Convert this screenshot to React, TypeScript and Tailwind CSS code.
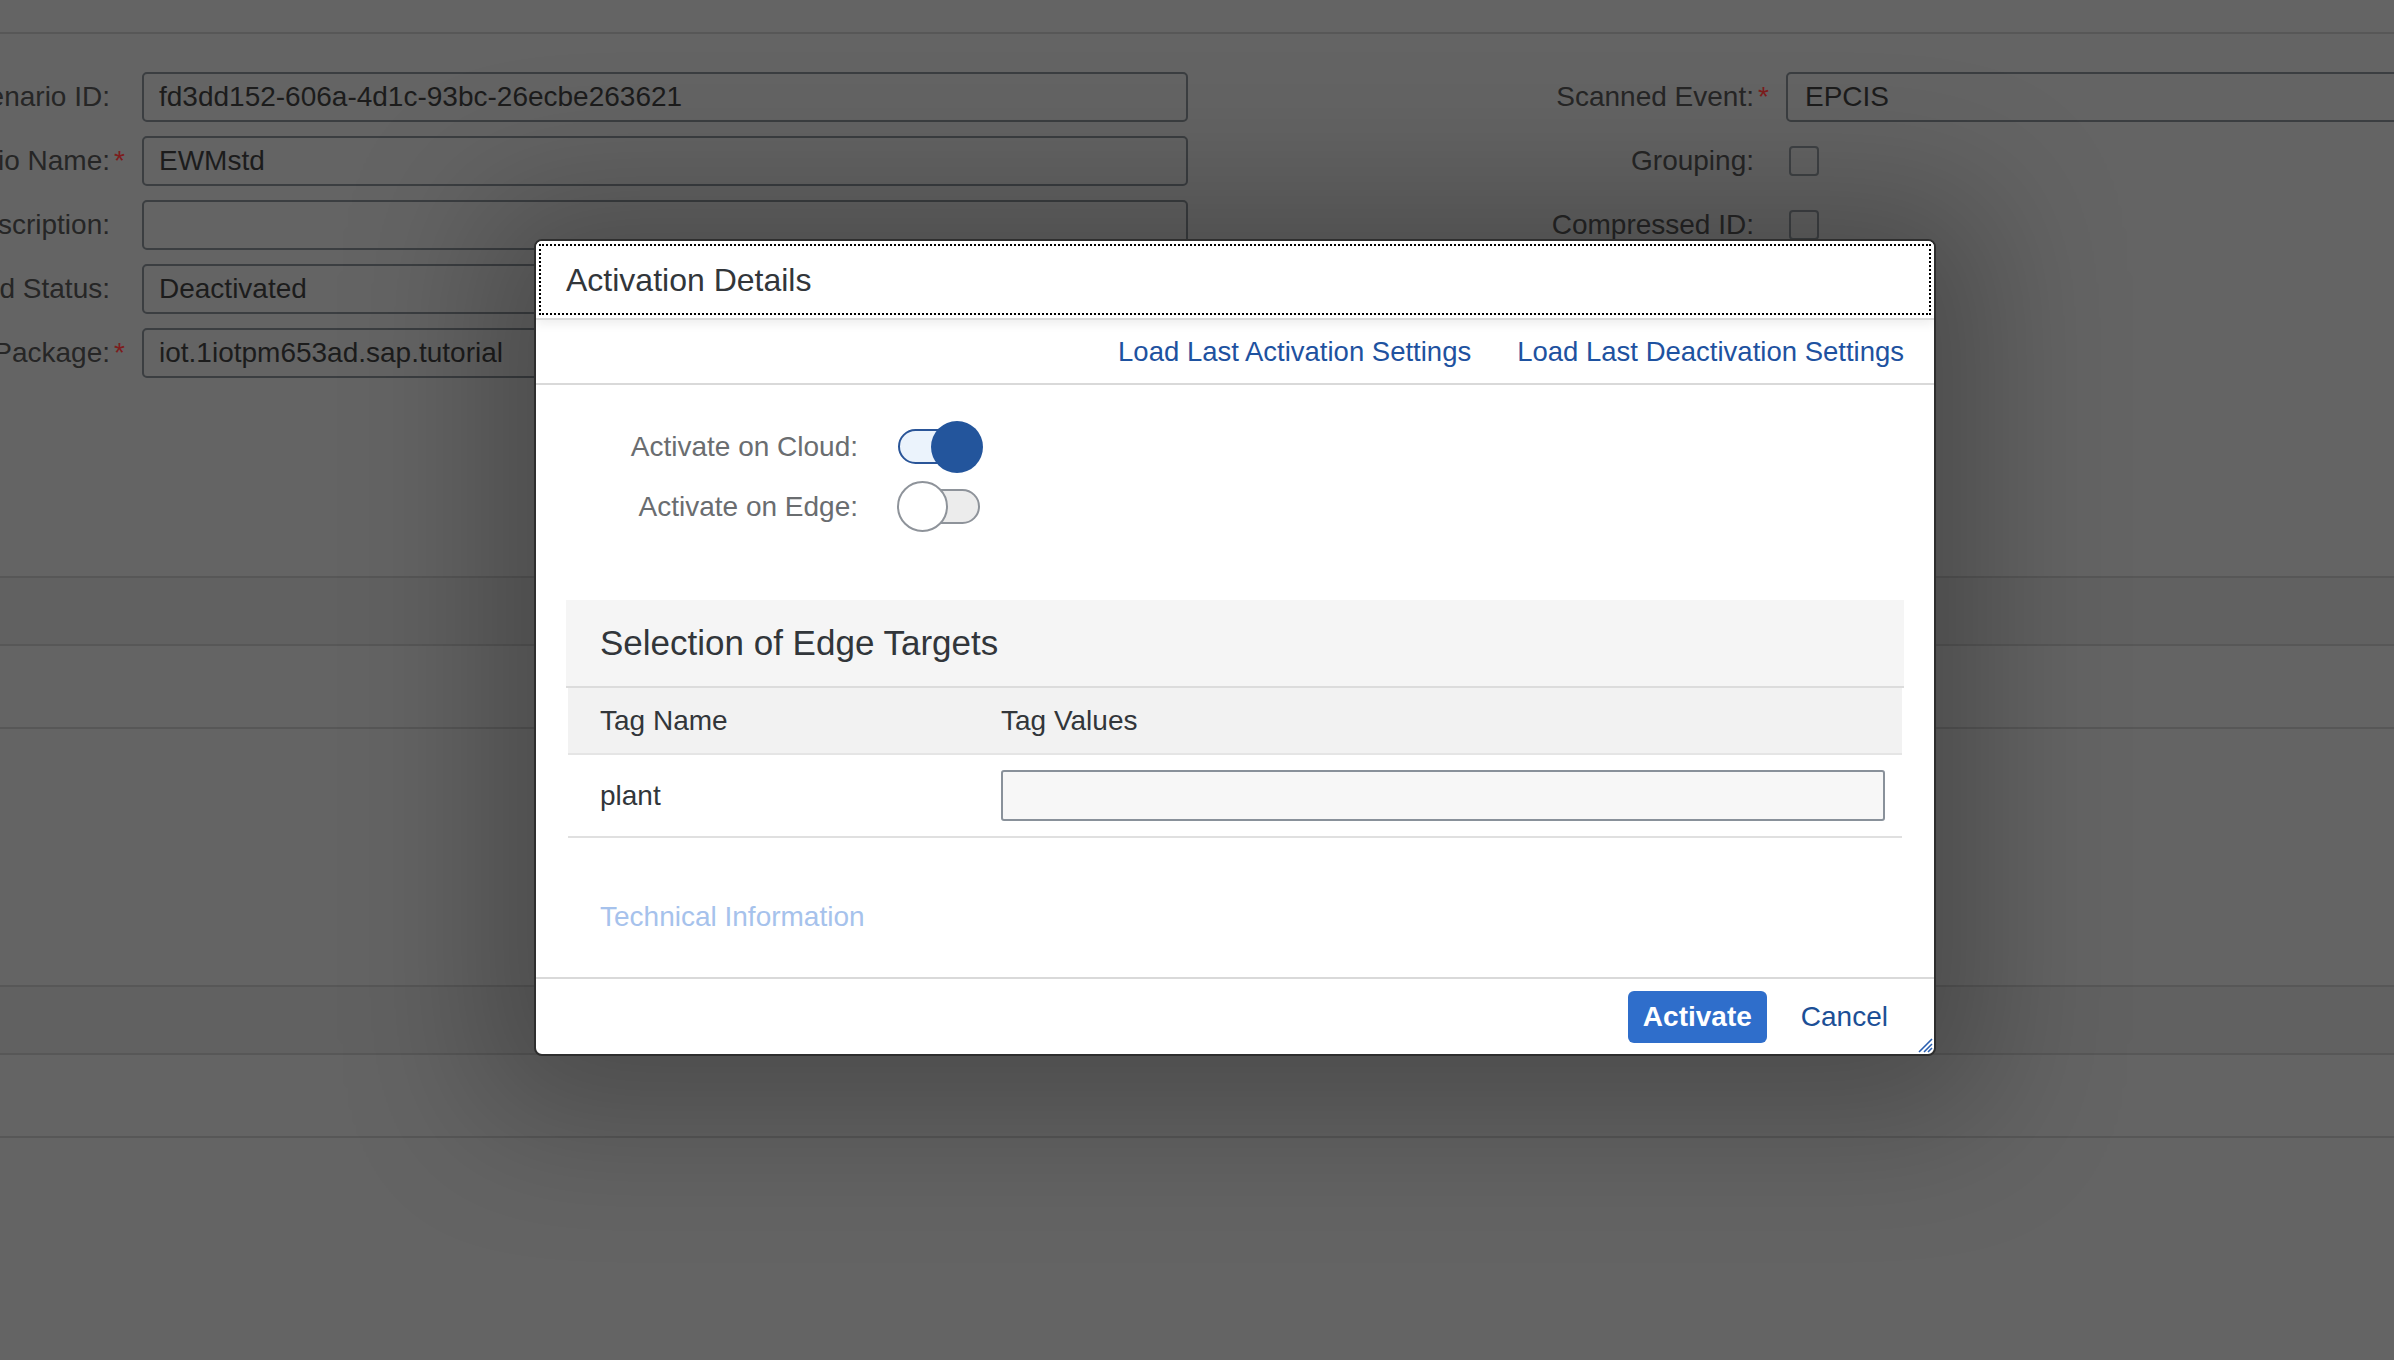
import React from "react";

type Field = { label: string; req?: boolean; value: string };

const leftFields: Field[] = [
  { label: "Scenario ID:", value: "fd3dd152-606a-4d1c-93bc-26ecbe263621" },
  { label: "Scenario Name:", req: true, value: "EWMstd" },
  { label: "Description:", value: "" },
  { label: "Deployed Status:", value: "Deactivated" },
  { label: "Package:", req: true, value: "iot.1iotpm653ad.sap.tutorial" },
];

function Switch({ on }: { on: boolean }) {
  if (on) {
    return (
      <div className="relative h-[52px] w-[86px]">
        <div className="absolute left-[1px] top-[8px] h-[35px] w-[70px] rounded-full border-2 border-[#2a5598] bg-[#ebf3fc]" />
        <div className="absolute right-0 top-0 h-[52px] w-[52px] rounded-full bg-[#23559c]" />
      </div>
    );
  }
  return (
    <div className="relative h-[52px] w-[86px]">
      <div className="absolute left-[20px] right-[3px] top-[8px] h-[35px] rounded-full border-2 border-[#8e939a] bg-[#ececec]" />
      <div className="absolute left-0 top-0 h-[51px] w-[51px] rounded-full border-2 border-[#8e939a] bg-white" />
    </div>
  );
}

function BgRow({ field, right }: { field: Field; right?: React.ReactNode }) {
  return (
    <div className="flex h-[50px] items-center">
      <div className="flex w-[110px] shrink-0 justify-end overflow-hidden whitespace-nowrap text-[#262626]">
        {field.label}
      </div>
      <span className="w-[32px] shrink-0 pl-[4px] text-[#7d1c1c]">{field.req ? "*" : ""}</span>
      <div className="flex h-[50px] w-[1046px] shrink-0 items-center rounded-[5px] border-2 border-[#3b3e41] px-[15px] text-[#1c1c1c]">
        {field.value}
      </div>
      {right}
    </div>
  );
}

function RightItem({ label, req, children }: { label: string; req?: boolean; children: React.ReactNode }) {
  return (
    <div className="ml-[112px] flex shrink-0 items-center">
      <div className="w-[454px] shrink-0 text-right whitespace-nowrap text-[#262626]">{label}</div>
      <span className="w-[32px] shrink-0 pl-[4px] text-[#7d1c1c]">{req ? "*" : ""}</span>
      {children}
    </div>
  );
}

const Checkbox = () => (
  <div className="ml-[3px] h-[30px] w-[30px] shrink-0 rounded-[4px] border-2 border-[#3f4245]" />
);

export default function App() {
  return (
    <div className="relative h-[1360px] w-[2394px] overflow-hidden bg-[#646464] font-['Liberation_Sans',Arial,sans-serif] text-[28px] leading-[40px]">
      {/* page behind the dialog */}
      <div className="h-[34px] border-b-2 border-[#575757]" />
      <div className="flex flex-col gap-[14px] pt-[38px]">
        <BgRow
          field={leftFields[0]}
          right={
            <RightItem label="Scanned Event:" req>
              <div className="flex h-[50px] w-[700px] shrink-0 items-center rounded-[5px] border-2 border-[#3b3e41] px-[17px] text-[#1c1c1c]">
                EPCIS
              </div>
            </RightItem>
          }
        />
        <BgRow
          field={leftFields[1]}
          right={
            <RightItem label="Grouping:">
              <Checkbox />
            </RightItem>
          }
        />
        <BgRow
          field={leftFields[2]}
          right={
            <RightItem label="Compressed ID:">
              <Checkbox />
            </RightItem>
          }
        />
        <BgRow field={leftFields[3]} />
        <BgRow field={leftFields[4]} />
      </div>
      <div className="mt-[198px]">
        <div className="h-[68px] border-t-2 border-[#575757] bg-[#616161]" />
        <div className="h-[83px] border-t-2 border-[#575757]" />
        <div className="h-[258px] border-t-2 border-[#575757]" />
        <div className="h-[68px] border-t-2 border-[#575757] bg-[#616161]" />
        <div className="h-[83px] border-t-2 border-[#575757]" />
        <div className="border-t-2 border-[#575757]" />
      </div>

      {/* dialog */}
      <div className="absolute left-[534px] top-[239px] flex h-[817px] w-[1402px] flex-col overflow-hidden rounded-[8px] border-2 border-[#2e2e2e] bg-white shadow-[0_10px_140px_50px_rgba(0,0,0,0.25)]">
        <div className="relative z-10 h-[79px] shrink-0 border-b-2 border-[#d9d9d9] bg-white p-[3px] shadow-[0_4px_10px_rgba(0,0,0,0.07)]">
          <div className="flex h-full items-center border-2 border-dotted border-black pl-[25px] text-[32px] text-[#32363a]">
            Activation Details
          </div>
        </div>
        <div className="flex h-[65px] shrink-0 items-center justify-end gap-[46px] border-b-2 border-[#d9d9d9] pr-[30px] text-[27.5px] text-[#1e52a0]">
          <span>Load Last Activation Settings</span>
          <span>Load Last Deactivation Settings</span>
        </div>

        <div className="flex-1 px-[30px] pt-[32px]">
          <div className="flex h-[60px] items-center">
            <div className="w-[292px] text-right text-[#6a6d70]">Activate on Cloud:</div>
            <div className="ml-[39px]">
              <Switch on />
            </div>
          </div>
          <div className="flex h-[60px] items-center">
            <div className="w-[292px] text-right text-[#6a6d70]">Activate on Edge:</div>
            <div className="ml-[39px]">
              <Switch on={false} />
            </div>
          </div>

          <div className="mt-[63px]">
            <div className="flex h-[88px] items-center border-b-2 border-[#dcdcdc] bg-[#f5f5f5] pl-[34px] text-[35px] text-[#32363a]">
              Selection of Edge Targets
            </div>
            <div className="mx-[2px]">
              <div className="flex h-[67px] items-center border-b-2 border-[#e5e5e5] bg-[#f2f2f2] text-[#32363a]">
                <div className="w-[433px] pl-[32px]">Tag Name</div>
                <div>Tag Values</div>
              </div>
              <div className="flex h-[83px] items-center border-b-2 border-[#e0e0e0] text-[#32363a]">
                <div className="w-[433px] pl-[32px]">plant</div>
                <div className="h-[51px] w-[884px] rounded-[3px] border-2 border-[#89919a] bg-[#f7f7f7]" />
              </div>
            </div>
          </div>

          <div className="mt-[59px] pl-[34px] text-[#a6c2ec]">Technical Information</div>
        </div>

        <div className="flex h-[77px] shrink-0 items-center justify-end gap-[18px] border-t-2 border-[#d9d9d9] pr-[30px]">
          <button className="h-[52px] w-[139px] rounded-[6px] bg-[#2f6ecb] font-bold text-white">Activate</button>
          <button className="h-[52px] px-[16px] text-[#1c4f96]">Cancel</button>
        </div>

        <svg className="absolute bottom-[1px] right-[1px]" width="18" height="18" viewBox="0 0 18 18">
          <path d="M4 17 L17 4 M9 17 L17 9 M13 17 L17 13" stroke="#2a5fb0" strokeWidth="1.6" />
        </svg>
      </div>
    </div>
  );
}
